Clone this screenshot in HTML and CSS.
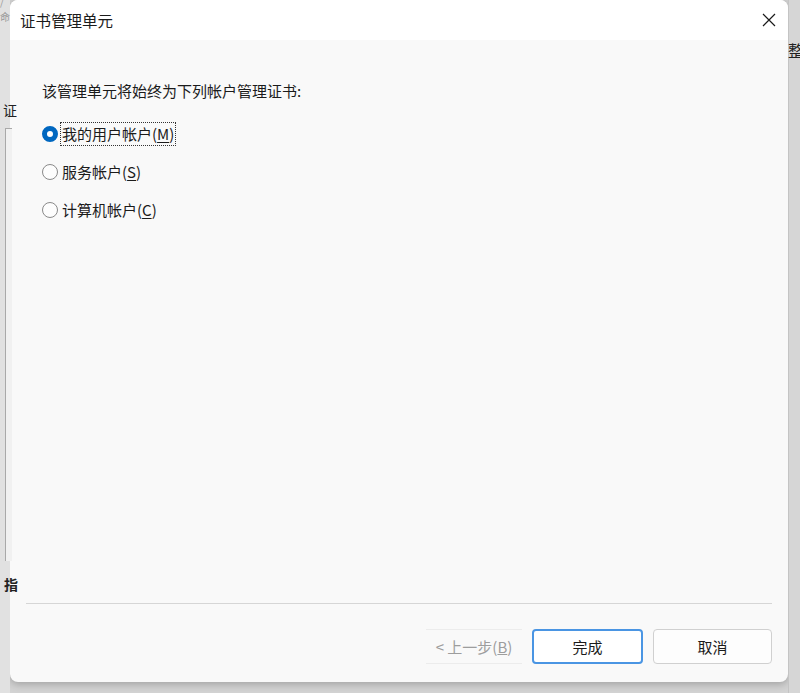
FILE: index.html
```html
<!DOCTYPE html>
<html lang="zh">
<head>
<meta charset="utf-8">
<link rel="stylesheet" href="styles.css">
</head>
<body>
<div class="desk">
  <div class="behind-left">
    <span class="frag frag-a">/命</span>
    <span class="frag frag-b">证</span>
    <div class="bl-panel"></div>
    <span class="frag frag-c">指</span>
  </div>
  <div class="dialog">
    <div class="titlebar">
      <span class="title">证书管理单元</span>
      <svg class="close" width="14" height="14" viewBox="0 0 14 14"><path d="M1 1L13 13M13 1L1 13" stroke="#1a1a1a" stroke-width="1.2" fill="none"/></svg>
    </div>
    <div class="content">
      <p class="intro">该管理单元将始终为下列帐户管理证书:</p>
      <div class="options">
        <label class="opt"><span class="radio on"></span><span class="lbl focus">我的用户帐户(<u>M</u>)</span></label>
        <label class="opt"><span class="radio"></span><span class="lbl">服务帐户(<u>S</u>)</span></label>
        <label class="opt"><span class="radio"></span><span class="lbl">计算机帐户(<u>C</u>)</span></label>
      </div>
    </div>
    <div class="footer">
      <div class="sep"></div>
      <div class="buttons">
        <button class="btn disabled">&lt; 上一步(<u>B</u>)</button>
        <button class="btn primary">完成</button>
        <button class="btn">取消</button>
      </div>
    </div>
  </div>
  <div class="behind-right">
    <span class="frag frag-r">整</span>
  </div>
</div>
</body>
</html>
```
FILE: styles.css
```css
html, body { margin: 0; padding: 0; }
body {
  width: 800px;
  height: 693px;
  overflow: hidden;
  background: #d3d3d3;
  font-family: "Noto Sans CJK SC", "Noto Sans", sans-serif;
  color: #1b1b1b;
}
.desk {
  display: flex;
  height: 693px;
}
.behind-left {
  width: 10px;
  position: relative;
  background: #e1e1e1;
}
.bl-panel {
  position: absolute;
  left: 5px; top: 128px;
  width: 6px; height: 432px;
  border-left: 1px solid #a9a9a9;
  border-top: 1px solid #a9a9a9;
  background: #f1f1f1;
}
.frag { position: absolute; font-size: 14px; color: #222; }
.frag-a { left: 0; top: -6px; color: #999; font-size: 10px; }
.frag-b { left: 3px; top: 100px; }
.frag-c { left: 4px; top: 574px; font-weight: bold; }
.behind-right {
  width: 11px;
  position: relative;
  background: #d6d6d6;
  border-left: 1px solid #c4c4c4;
}
.frag-r { left: -1px; top: 38px; font-size: 16px; }
.dialog {
  width: 779px;
  height: 682px;
  background: #f9f9f9;
  border-radius: 8px;
  box-shadow: 0 2px 8px rgba(0,0,0,0.25);
  display: flex;
  flex-direction: column;
  overflow: hidden;
}
.titlebar {
  height: 40px;
  background: #ffffff;
  display: flex;
  align-items: center;
  justify-content: space-between;
  padding: 0 12px 0 10px;
}
.title { font-size: 15.5px; color: #1b1b1b; }
.content {
  flex: 1;
  padding: 0 0 0 32px;
}
.intro {
  margin: 40px 0 0 0;
  font-size: 15px;
  line-height: 22px;
  color: #1b1b1b;
}
.options {
  margin-top: 20px;
  display: flex;
  flex-direction: column;
  gap: 14px;
}
.opt {
  display: flex;
  align-items: center;
  height: 24px;
}
.radio {
  width: 16px;
  height: 16px;
  box-sizing: border-box;
  border-radius: 50%;
  border: 1px solid #8a8a8a;
  background: #fdfdfd;
}
.radio.on {
  border: 5px solid #0067c0;
  background: #ffffff;
}
.lbl {
  margin-left: 2px;
  font-size: 15px;
  line-height: 22px;
  padding: 0 1px;
  border: 1px dotted transparent;
}
.lbl.focus { border-color: #333; }
.lbl u { text-decoration: underline; text-underline-offset: 2px; }
.footer {
  padding: 0 16px 18px 16px;
}
.sep {
  height: 1px;
  background: #d6d6d6;
  margin: 0 0 25px 0;
}
.buttons {
  display: flex;
  justify-content: flex-end;
  gap: 10px;
}
.btn {
  font-family: "Noto Sans CJK SC", "Noto Sans", sans-serif;
  font-size: 15px;
  height: 35px;
  border-radius: 4px;
  border: 1px solid #d0d0d0;
  background: #fdfdfd;
  color: #1b1b1b;
  width: 119px;
  padding: 0;
}
.btn.disabled {
  width: 96px;
  color: #9d9d9d;
  border-color: #ececec;
  background: #f9f9f9;
  border-radius: 0;
  border-left: none;
  border-right: none;
}
.btn.primary {
  width: 111px;
  border: 2px solid #4a95e3;
  background: #ffffff;
}
u { text-decoration: underline; }
```
